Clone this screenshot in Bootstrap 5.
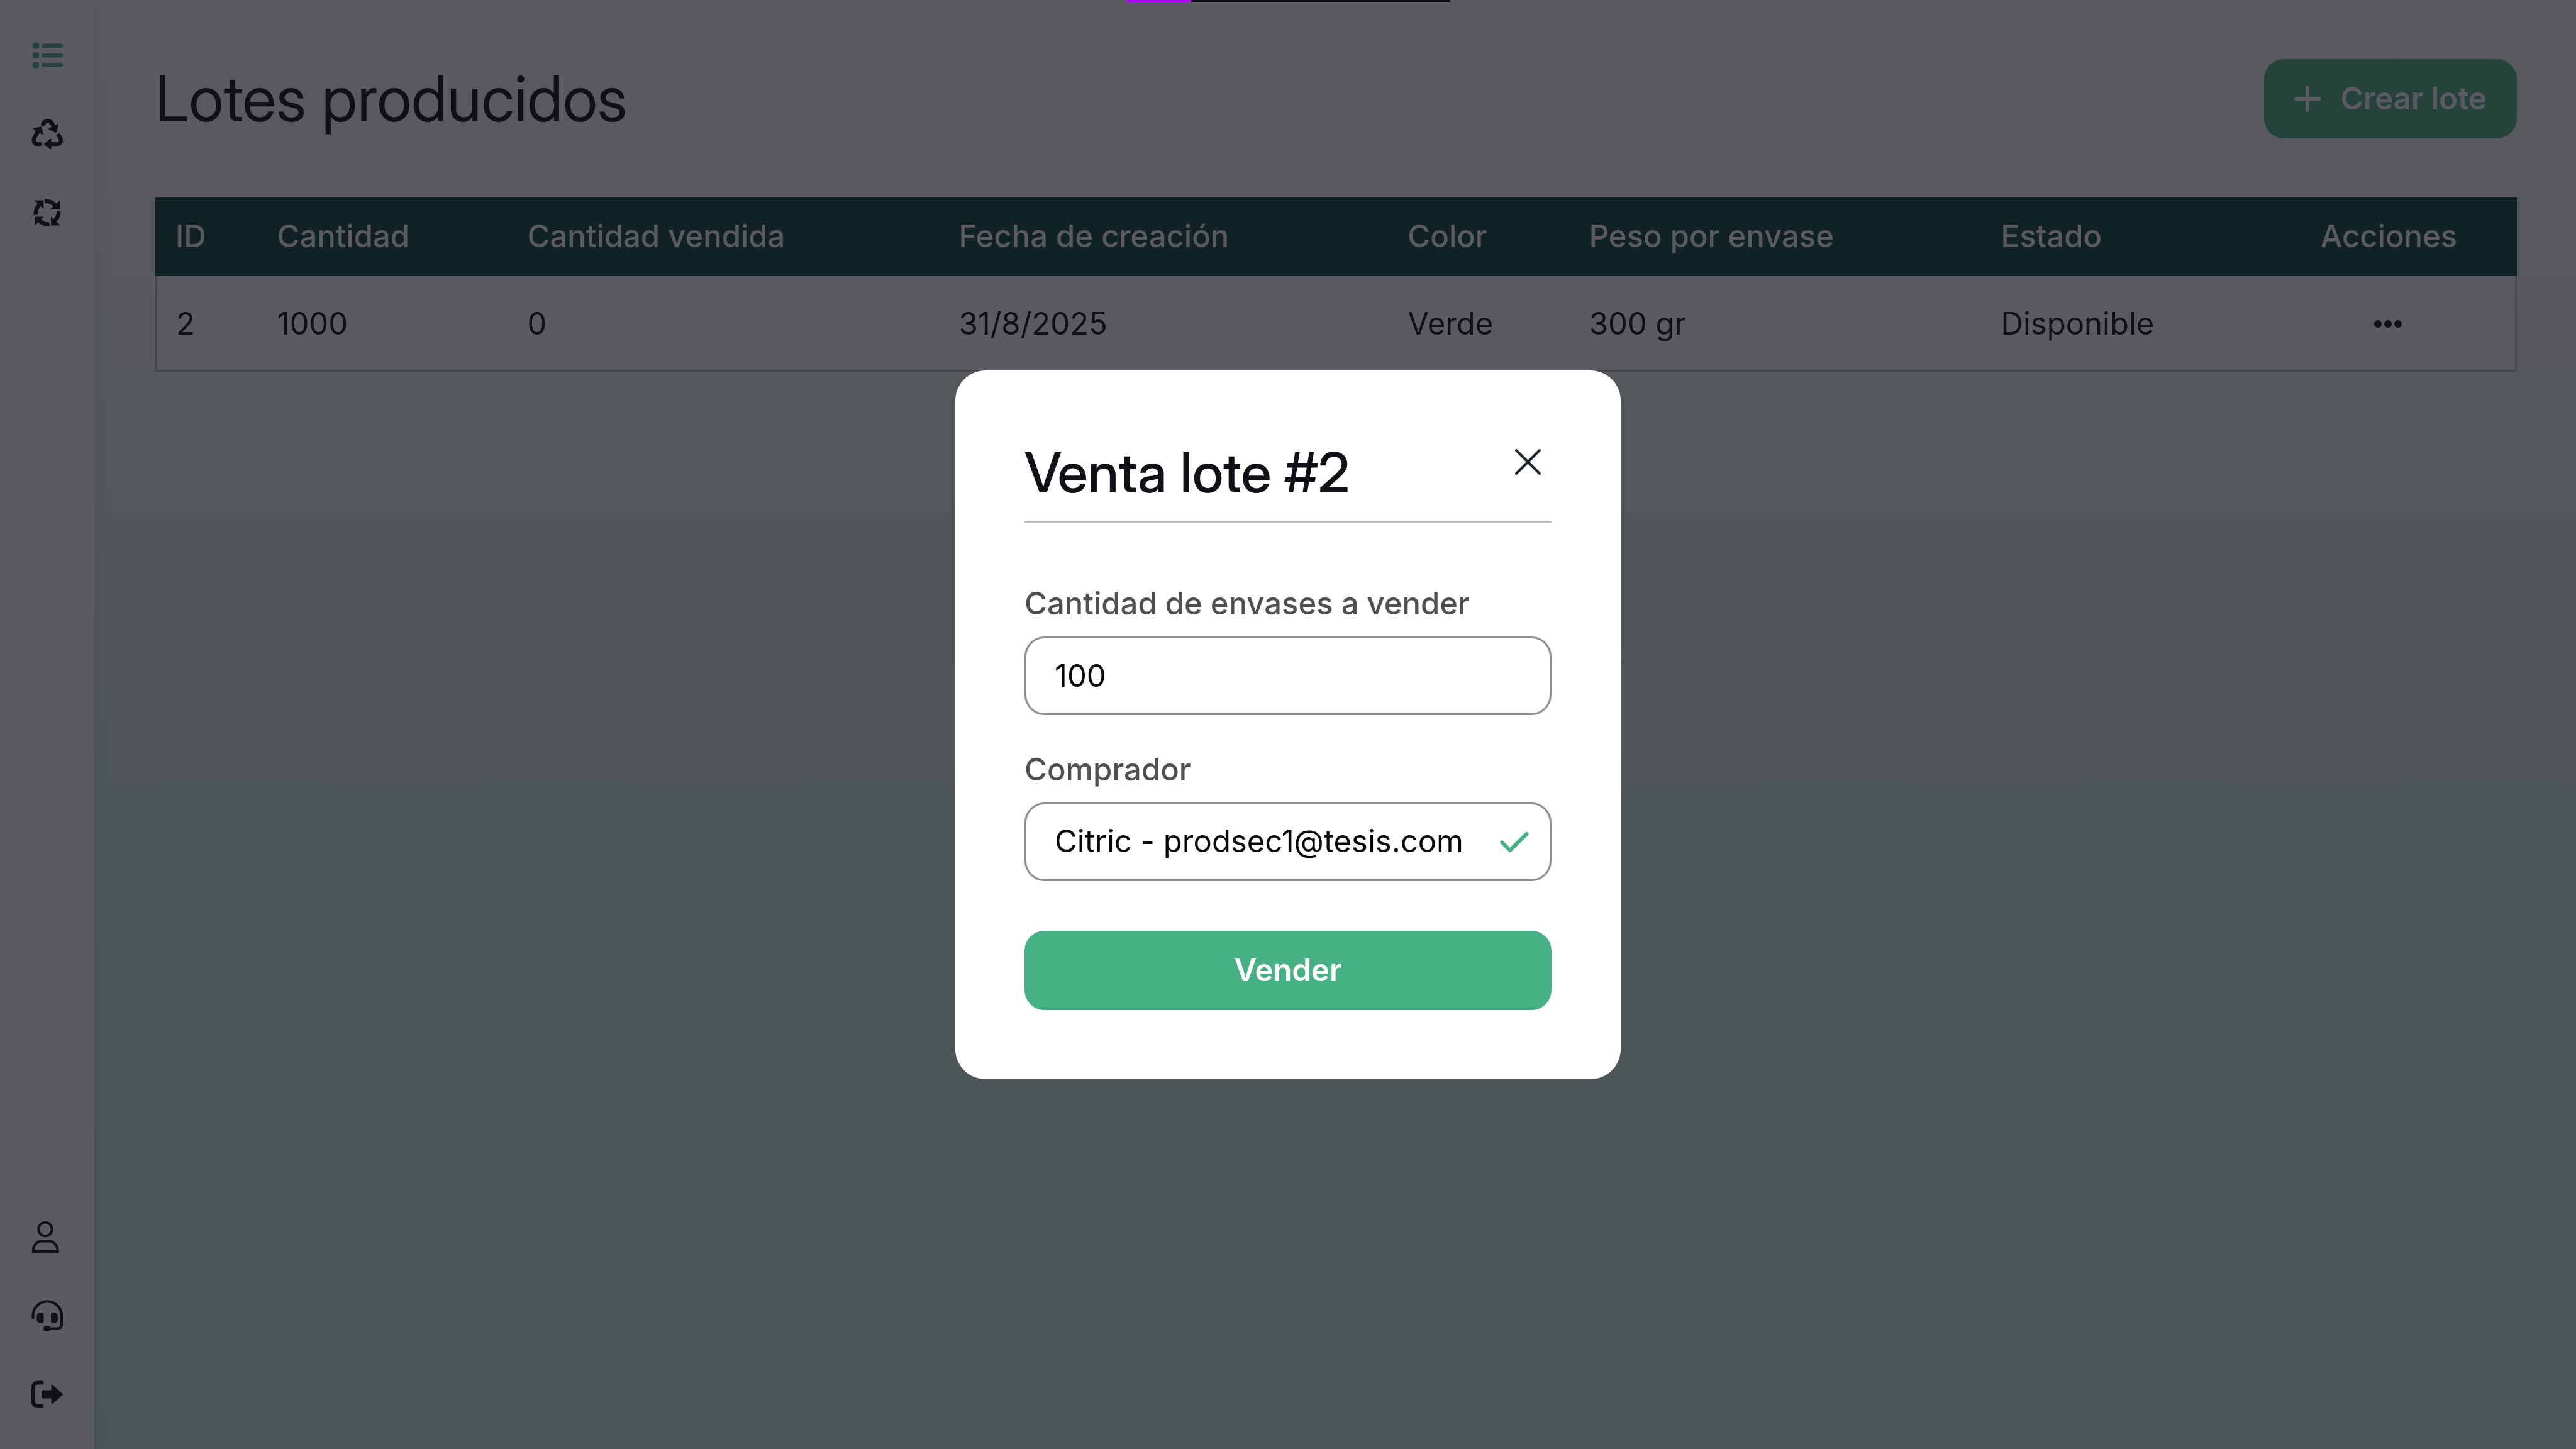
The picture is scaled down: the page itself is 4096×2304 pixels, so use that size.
<!DOCTYPE html>
<html lang="es">
<head>
<meta charset="utf-8">
<meta name="viewport" content="width=device-width, initial-scale=1">
<title>Lotes producidos</title>
<link href="https://cdn.jsdelivr.net/npm/bootstrap@5.3.0/dist/css/bootstrap.min.css" rel="stylesheet">
<style>
  :root { --brand: #46b185; --ink: #040308; }
  body { font-family: Inter, "Liberation Sans", sans-serif; font-size: 49px; line-height: 60px; color: var(--ink); }
  .app-shell { background: linear-gradient(180deg, #fff 0%, #d8f1ed 52%, #c6efe3 100%); }
  .side-rail { width: 150px; padding: 25px 0; background: #fff; box-shadow: 0 0 24px rgba(0, 80, 60, .12); }
  .side-rail a { display: flex; align-items: center; justify-content: center; height: 125px; color: var(--ink); }
  .side-rail a.current { color: var(--brand); }
  .side-rail svg { width: 50px; height: 50px; }
  .page-area { padding: 94px 94px 94px 97px; }
  .page-title, .sale-title { font-family: "Inter Display", Inter, "Liberation Sans", sans-serif; }
  .page-title { font-size: 100px; line-height: 120px; font-weight: 400; }
  .brand-btn { --bs-btn-color: #fff; --bs-btn-bg: var(--brand); --bs-btn-border-color: var(--brand);
    --bs-btn-hover-color: #fff; --bs-btn-hover-bg: #3a9c74; --bs-btn-hover-border-color: #3a9c74;
    --bs-btn-padding-x: 45px; --bs-btn-padding-y: 30px; --bs-btn-border-radius: 32px; --bs-btn-border-width: 3px;
    --bs-btn-font-size: 49px; --bs-btn-font-weight: 600; --bs-btn-line-height: 60px; }
  .create-btn { gap: 32px; }
  .lots { margin-top: 94px; table-layout: fixed; border-collapse: separate; border-spacing: 0; color: var(--ink); }
  .lots th { padding: 32px 32px 33px; line-height: 60px; font-weight: 500; color: #fff; background: #003e3b; border: 0; white-space: nowrap; }
  .lots td { padding: 46px 32px 43px; color: var(--ink); background: #fff; border-bottom: 3px solid #bcbec0; }
  .lots td:first-child { border-left: 3px solid #bcbec0; padding-left: 30px; }
  .lots td:last-child { border-right: 3px solid #bcbec0; }
  .dots-btn { color: var(--ink); border: 0; background: none; padding: 0; line-height: 0; }
  .dots-btn svg { width: 44px; height: 12px; }
  .shade { --bs-backdrop-bg: #18161c; --bs-backdrop-opacity: .71; }
  .sale-dialog { --bs-modal-width: 1058px; margin: 0 auto; min-height: 100%; }
  .sale-card { padding: 108px 110px 110px; border: 0; border-radius: 48px; color: #101016; }
  .sale-head { border-bottom: 3px solid #bdbdbd; padding-bottom: 24px; margin-bottom: 98px; }
  .sale-title { font-size: 88px; line-height: 108px; font-weight: 500; }
  .close-btn { border: 0; background: none; padding: 16px; line-height: 0; color: #18222f; }
  .close-btn svg { width: 43px; height: 43px; }
  .field-label { font-weight: 500; line-height: 60px; margin-bottom: 22px; color: #505050; }
  .field-group + .field-group { margin-top: 57px; }
  .field-box, .field-box:focus { height: 125px; padding: 0 45px; border: 3px solid #8e8e8e; border-radius: 32px;
    font-size: 49px; line-height: 60px; color: #08080c; background: #fff; }
  .valid-tick { position: absolute; right: 36px; top: 46px; width: 46px; height: 34px; color: var(--brand); pointer-events: none; }
  .sell-btn { margin-top: 79px; }
  .top-strip { left: 50%; width: 515px; height: 3px; margin-left: -257px; background: #120e16; z-index: 1100; border-radius: 0; }
  .top-strip .progress-bar { background: #b900ff; }
</style>
</head>
<body>
<div class="app-shell d-flex min-vh-100">
  <nav class="side-rail d-flex flex-column justify-content-between flex-shrink-0" aria-label="Principal">
    <div>
      <a href="#" class="current" aria-label="Lotes">
        <svg viewBox="0 0 50 50" fill="currentColor"><rect x="2" y="4.5" width="10" height="10" rx="3"/><rect x="2" y="20" width="10" height="10" rx="3.5"/><rect x="2" y="35.500" width="10" height="10" rx="3.5"/><rect x="16" y="6.500" width="34" height="6.500" rx="3"/><rect x="16" y="22" width="34" height="6.500" rx="3"/><rect x="16" y="37" width="34" height="6.500" rx="3"/></svg>
      </a>
      <a href="#" aria-label="Reciclaje">
        <svg viewBox="0 0 50 50" fill="none" stroke="currentColor" stroke-width="6.500" stroke-linecap="round" stroke-linejoin="round"><path d="M18.500 9.500C21 3 29.500 2.500 32.500 8L35 13"/><path d="M11 20 5.500 29.500C1.500 36 4.500 41 10 41H13.500"/><path d="M43.500 27.500 46 32C48.500 37 45 41 40.500 41H29"/><g fill="currentColor" stroke-width="2"><path d="M42 10 39 22 28 17Z"/><path d="M3.500 16.500 15.500 14.500 18 25.500Z"/><path d="M21 41 30.500 33.500V48.500Z"/></g></svg>
      </a>
      <a href="#" aria-label="Ciclo">
        <svg viewBox="0 0 50 50" fill="none" stroke="currentColor" stroke-width="6.500"><path d="M15 10Q6 18 6.800 28.500"/><path d="M21.500 6.800Q31 6 38.500 14"/><path d="M43.300 22.700Q44 32 36 39"/><path d="M11 36Q18 44.500 28.500 43.500"/><g fill="currentColor" stroke-width="1" stroke-linejoin="round"><path d="M5.500 6H19V18.500Z"/><path d="M45 6V18.500H31.500Z"/><path d="M31.500 32V45H45Z"/><path d="M5.500 32H18.500L5.500 45Z"/></g></svg>
      </a>
    </div>
    <div>
      <a href="#" aria-label="Perfil">
        <svg viewBox="0 0 50 50" fill="none" stroke="currentColor" stroke-width="4" stroke-linejoin="round"><circle cx="22" cy="12.500" r="10.800"/><path d="M2.500 48C3 38.500 8.500 31.500 16 31.500H28.500C36 31.500 41.500 38.500 42 48Z"/></svg>
      </a>
      <a href="#" aria-label="Soporte">
        <svg viewBox="0 0 50 50" fill="none" stroke="currentColor" stroke-width="4.200" stroke-linecap="round"><path d="M2.500 28.500V25A22.700 22.700 0 0 1 48 25V38.500Q48 45.500 41 45.500H28"/><g fill="currentColor" stroke="none"><path d="M15 20H16Q19.500 20 19.500 23.500V33.500Q19.500 37 16 37H15Q8 36.500 8 28.500T15 20Z"/><path d="M35.500 20H34.500Q31 20 31 23.500V33.500Q31 37 34.500 37H35.500Q42.500 36.500 42.500 28.500T35.500 20Z"/><rect x="19" y="41" width="12" height="9" rx="4.500"/></g></svg>
      </a>
      <a href="#" aria-label="Salir">
        <svg viewBox="0 0 50 50" fill="none" stroke="currentColor" stroke-width="6" stroke-linecap="round" stroke-linejoin="round"><path d="M16.500 6.500H11Q3 6.500 3 14.500V36Q3 44 11 44H16.500"/><path fill="currentColor" stroke-width="3" d="M17.500 20H33V11.500L48.500 25.200 33 39V30H17.500Z"/></svg>
      </a>
    </div>
  </nav>
  <main class="page-area flex-grow-1">
    <header class="d-flex justify-content-between align-items-center">
      <h1 class="page-title m-0">Lotes producidos</h1>
      <button type="button" class="btn brand-btn create-btn d-flex align-items-center">
        <svg width="42" height="42" viewBox="0 0 42 42" stroke="currentColor" stroke-width="6" stroke-linecap="round"><path d="M21 3V39M3 21H39"/></svg>
        <span>Crear lote</span>
      </button>
    </header>
    <table class="lots w-100">
      <colgroup>
        <col style="width:4.3%"><col style="width:10.6%"><col style="width:18.27%"><col style="width:19.01%"><col style="width:7.68%"><col style="width:17.44%"><col style="width:11.86%"><col style="width:10.84%">
      </colgroup>
      <thead>
        <tr><th scope="col">ID</th><th scope="col">Cantidad</th><th scope="col">Cantidad vendida</th><th scope="col">Fecha de creación</th><th scope="col">Color</th><th scope="col">Peso por envase</th><th scope="col">Estado</th><th scope="col" class="text-center">Acciones</th></tr>
      </thead>
      <tbody>
        <tr><td>2</td><td>1000</td><td>0</td><td>31/8/2025</td><td>Verde</td><td>300 gr</td><td>Disponible</td>
          <td class="align-middle"><button type="button" class="dots-btn d-flex mx-auto" aria-label="Acciones del lote 2"><svg viewBox="0 0 44 12" fill="currentColor"><circle cx="6" cy="6" r="6"/><circle cx="22" cy="6" r="6"/><circle cx="38" cy="6" r="6"/></svg></button></td></tr>
      </tbody>
    </table>
  </main>
</div>

<div class="modal-backdrop show shade"></div>

<div class="modal d-block" role="dialog" aria-modal="true" aria-labelledby="saleTitle">
  <div class="modal-dialog modal-dialog-centered sale-dialog">
    <form class="modal-content sale-card">
      <div class="sale-head d-flex justify-content-between align-items-start">
        <h2 class="sale-title m-0" id="saleTitle">Venta lote #2</h2>
        <button type="button" class="close-btn" aria-label="Cerrar"><svg viewBox="0 0 43 43" stroke="currentColor" stroke-width="4" stroke-linecap="round"><path d="M3 3 40 40M40 3 3 40"/></svg></button>
      </div>
      <div class="field-group">
        <label class="field-label" for="qty">Cantidad de envases a vender</label>
        <input class="form-control field-box" id="qty" type="text" inputmode="numeric" value="100">
      </div>
      <div class="field-group">
        <label class="field-label" for="buyer">Comprador</label>
        <div class="position-relative">
          <select class="form-select field-box" id="buyer"><option selected>Citric - prodsec1@tesis.com</option></select>
          <svg class="valid-tick" viewBox="0 0 46 34" fill="none" stroke="currentColor" stroke-width="6" stroke-linecap="round" stroke-linejoin="round"><path d="M3.500 17.500 16 30 42.500 4"/></svg>
        </div>
      </div>
      <button type="submit" class="btn brand-btn sell-btn w-100">Vender</button>
    </form>
  </div>
</div>

<div class="progress top-strip position-fixed top-0" role="progressbar" aria-label="Carga" aria-valuenow="20" aria-valuemin="0" aria-valuemax="100"><div class="progress-bar" style="width:20%"></div></div>
<script src="https://cdn.jsdelivr.net/npm/bootstrap@5.3.0/dist/js/bootstrap.bundle.min.js"></script>
</body>
</html>
